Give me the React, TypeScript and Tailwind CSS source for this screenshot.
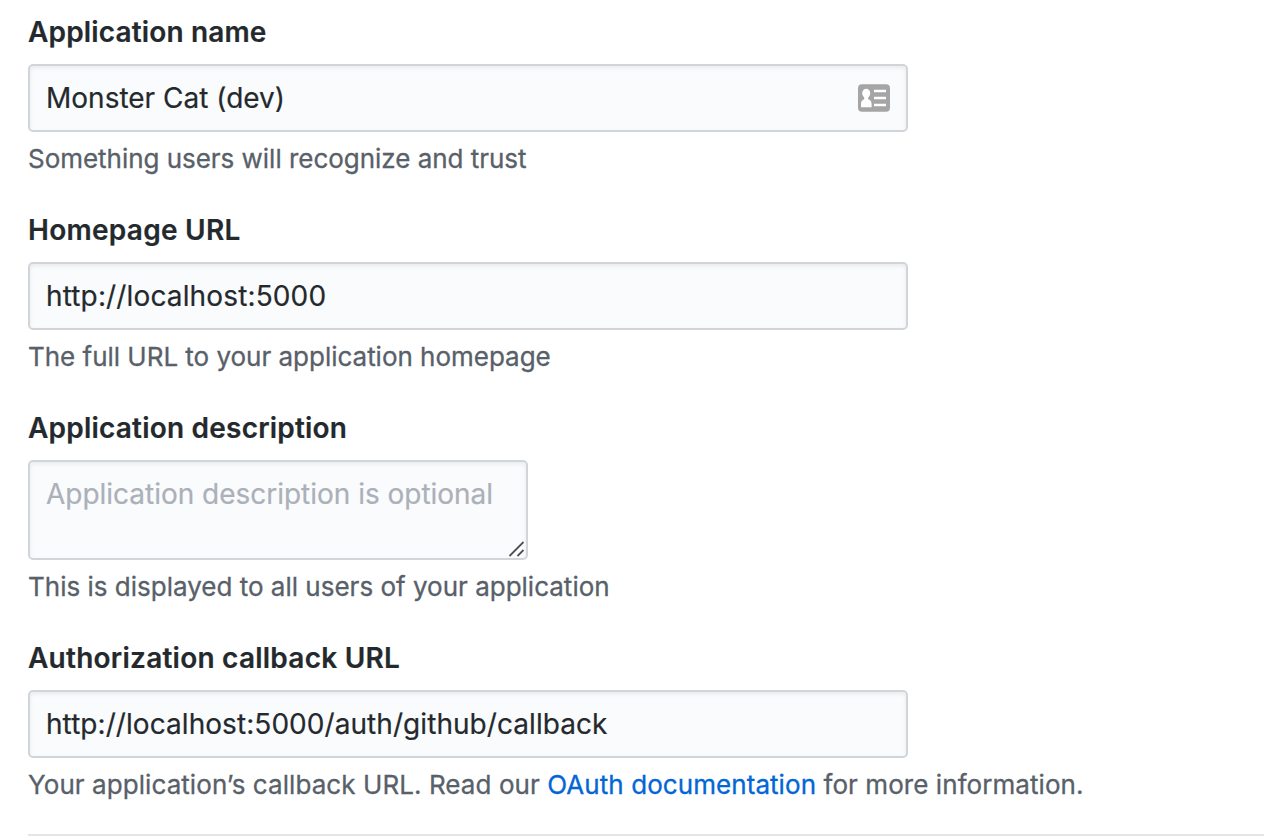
import type { ReactNode } from "react";

const control =
  "block rounded-[5px] border-2 border-[#d1d5da] bg-[#fafbfc] px-4 text-[28px] text-[#24292e] shadow-[inset_0_2px_4px_rgba(27,31,35,0.075)] outline-none [-webkit-text-stroke:0.2px] placeholder:text-[#abb0b9]";

function Field({ id, label, labelClass, note, noteClass, children }: {
  id: string;
  label: string;
  labelClass: string;
  note: ReactNode;
  noteClass: string;
  children: ReactNode;
}) {
  return (
    <div className="flex flex-col items-start">
      <label htmlFor={id} className={`mb-[11px] text-[28px] leading-[42px] font-semibold whitespace-nowrap text-[#24292e] [-webkit-text-stroke:0.2px] ${labelClass}`}>
        {label}
      </label>
      {children}
      <p className={`mt-2 text-[26px] leading-[38px] whitespace-nowrap text-[#586069] [-webkit-text-stroke:0.3px] ${noteClass}`}>{note}</p>
    </div>
  );
}

function ContactCardIcon() {
  return (
    <svg className="pointer-events-none absolute top-5 right-[18px] h-7 w-8" viewBox="0 0 32 28">
      <rect y="0.3" width="32" height="27.4" rx="4" fill="#a5a5a5" />
      <ellipse cx="8.2" cy="9.3" rx="4" ry="4.5" fill="#fff" />
      <path d="M6.2 12h4v3.2c2.400 .8 3.400 2.200 3.400 4.800v3.300H3V20c0-2.600 1-4 3.200-4.800z" fill="#fff" />
      <path d="M16 7h12M16 14h12M16 21h12" stroke="#fff" strokeWidth="2.600" />
    </svg>
  );
}

function ResizeGrip() {
  return (
    <svg className="pointer-events-none absolute right-0 bottom-0 h-5 w-5" viewBox="0 0 20 20">
      <path d="M1.500 16 15.500 2M9.500 16l6-6" stroke="#fff" strokeWidth="4" />
      <path d="M1.500 16 15.500 2M9.500 16l6-6" stroke="#505052" strokeWidth="1.800" />
    </svg>
  );
}

export default function App() {
  return (
    <main className="h-[838px] w-[1264px] overflow-hidden bg-white pt-[11px] pl-7 font-['Inter',sans-serif]">
      <form className="flex flex-col gap-[31px]">
        <Field id="name" label="Application name" labelClass="tracking-[0.15px]" note="Something users will recognize and trust" noteClass="tracking-[-0.03px]">
          <div className="relative">
            <input id="name" className={`${control} h-[68px] w-[880px]`} defaultValue="Monster Cat (dev)" />
            <ContactCardIcon />
          </div>
        </Field>
        <Field id="homepage" label="Homepage URL" labelClass="tracking-[0.27px]" note="The full URL to your application homepage" noteClass="tracking-[-0.02px]">
          <input id="homepage" className={`${control} h-[68px] w-[880px] tracking-[0.14px]`} defaultValue="http://localhost:5000" />
        </Field>
        <Field id="description" label="Application description" labelClass="tracking-[0.21px]" note="This is displayed to all users of your application" noteClass="">
          <div className="relative">
            <textarea id="description" className={`${control} h-[100px] w-[500px] resize-none overflow-hidden py-[11px] leading-[42px] tracking-[-0.02px]`} placeholder="Application description is optional" />
            <ResizeGrip />
          </div>
        </Field>
        <Field
          id="callback"
          label="Authorization callback URL"
          labelClass="tracking-[0.24px]"
          note={<>Your application’s callback URL. Read our <a className="text-[#0366d6]">OAuth documentation</a> for more information.</>}
          noteClass="tracking-[0.07px]"
        >
          <input id="callback" className={`${control} h-[68px] w-[880px] tracking-[0.06px]`} defaultValue="http://localhost:5000/auth/github/callback" />
        </Field>
      </form>
      <hr className="mt-[30px] border-t-2 border-[#e5e5e5]" />
    </main>
  );
}
